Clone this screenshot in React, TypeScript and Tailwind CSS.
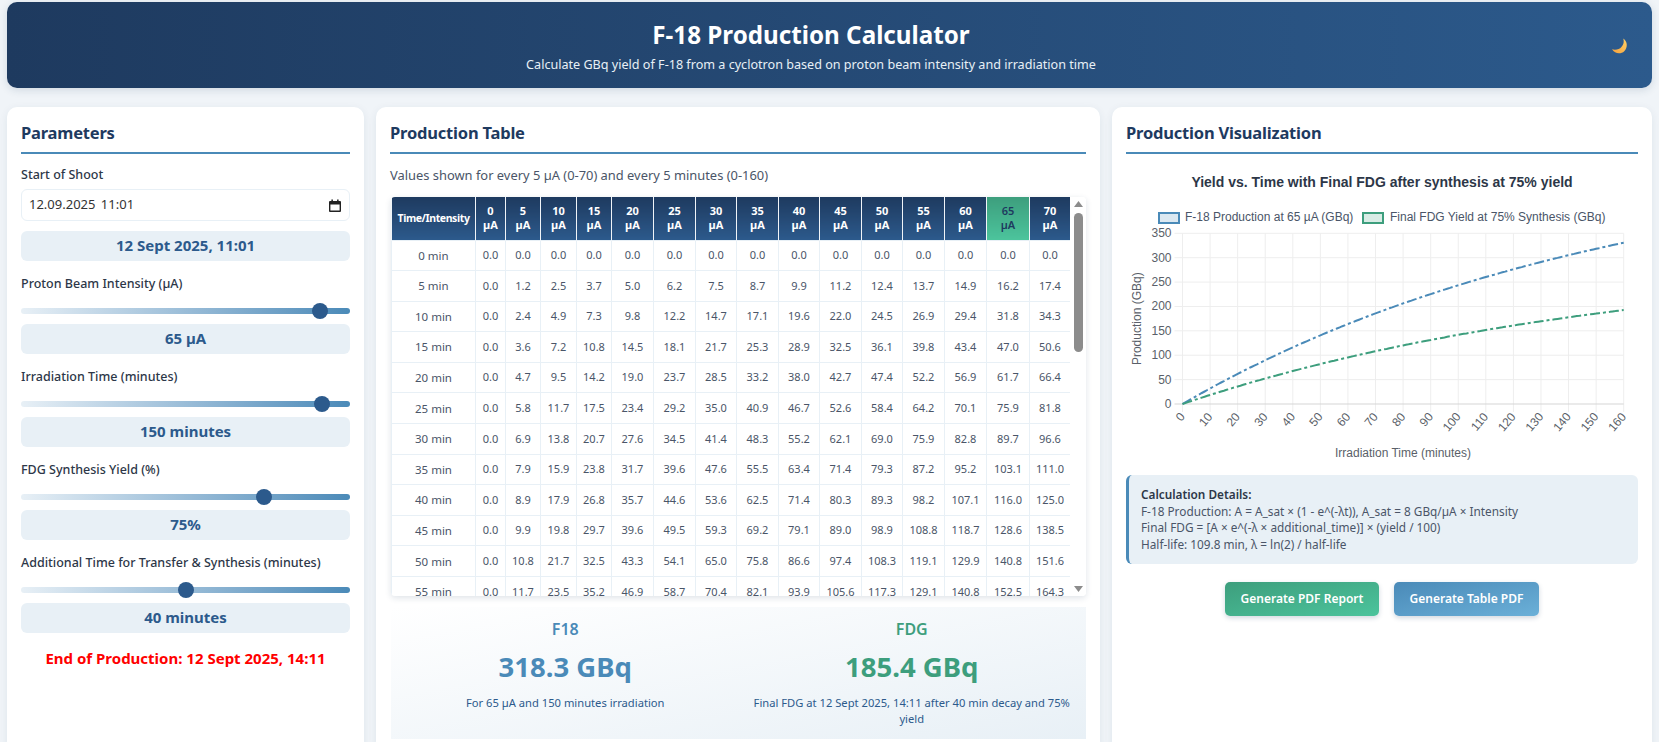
const HALF_LIFE = 109.8;
const LAMBDA = Math.LN2 / HALF_LIFE;
const SAT_PER_UA = 8;

const production = (intensity: number, minutes: number) =>
  SAT_PER_UA * intensity * (1 - Math.exp(-LAMBDA * minutes));

const INTENSITIES = Array.from({ length: 15 }, (_, i) => i * 5);
// only the rows the visible part of the table shows
const TIMES = Array.from({ length: 12 }, (_, i) => i * 5);

const COL_WIDTHS = [
  'w-[84px]', 'w-[30px]', 'w-[35px]', 'w-[36px]', 'w-[35px]', 'w-[42px]', 'w-[42px]', 'w-[41px]',
  'w-[42px]', 'w-[41px]', 'w-[42px]', 'w-[41px]', 'w-[42px]', 'w-[42px]', 'w-[43px]', 'w-[41px]',
];

function CardTitle({ children }: { children: string }) {
  return (
    <h2 className="h-[33px] border-b-2 border-[#4a8ab8] text-[16.5px] leading-[23px] font-bold tracking-[-0.2px] text-[#1e3a5f]">
      {children}
    </h2>
  );
}

function ValueBadge({ children, className = '' }: { children: string; className?: string }) {
  return (
    <div className={`flex h-[30px] items-center justify-center rounded-md bg-[#e8f0f6] pb-px text-[15px] font-bold text-[#2c5a8c] ${className}`}>
      {children}
    </div>
  );
}

function SliderField({ label, min, max, value, text }: { label: string; min: number; max: number; value: number; text: string }) {
  return (
    <div className="mt-[14px]">
      <label className="block text-[12.5px] leading-[18px] font-medium text-[#2d3748]">{label}</label>
      <input
        type="range"
        min={min}
        max={max}
        defaultValue={value}
        className="mt-[15px] mb-[10px] block h-[6px] w-full cursor-pointer appearance-none rounded-[3px] bg-gradient-to-r from-[#e8f0f6] to-[#4a8ab8] [&::-webkit-slider-thumb]:h-4 [&::-webkit-slider-thumb]:w-4 [&::-webkit-slider-thumb]:appearance-none [&::-webkit-slider-thumb]:rounded-full [&::-webkit-slider-thumb]:bg-[#2c5a8c]"
      />
      <ValueBadge>{text}</ValueBadge>
    </div>
  );
}

function ParametersCard() {
  return (
    <section className="rounded-[10px] bg-white p-[14px] shadow-[0_2px_8px_rgba(30,58,95,0.08)]">
      <CardTitle>Parameters</CardTitle>
      <label className="mt-[12px] block text-[12.5px] leading-[18px] font-medium text-[#2d3748]">Start of Shoot</label>
      <div className="mt-[5px] flex h-8 items-center justify-between rounded-md border border-[#e8f0f6] pr-[8px] pl-[7px] text-[13px] text-[#333]">
        <span className="[word-spacing:2px]">12.09.2025 11:01</span>
        <svg width="12" height="13" viewBox="0 0 12 13">
          <path d="M1 2h10a1 1 0 0 1 1 1v9a1 1 0 0 1-1 1H1a1 1 0 0 1-1-1V3a1 1 0 0 1 1-1zm.4 3.6v6h9.2v-6z" fill="#222" />
          <rect x="2.4" y="0.5" width="1.5" height="2.5" fill="#222" />
          <rect x="8.1" y="0.5" width="1.5" height="2.5" fill="#222" />
        </svg>
      </div>
      <ValueBadge className="mt-[10px]">12 Sept 2025, 11:01</ValueBadge>
      <SliderField label="Proton Beam Intensity (µA)" min={0} max={70} value={65} text="65 µA" />
      <SliderField label="Irradiation Time (minutes)" min={0} max={160} value={150} text="150 minutes" />
      <SliderField label="FDG Synthesis Yield (%)" min={0} max={100} value={75} text="75%" />
      <SliderField label="Additional Time for Transfer & Synthesis (minutes)" min={0} max={80} value={40} text="40 minutes" />
      <p className="mt-[15px] text-center text-[15px] leading-5 font-bold text-[#ff0000]">End of Production: 12 Sept 2025, 14:11</p>
    </section>
  );
}

function ScrollBar() {
  return (
    <div className="flex w-4 flex-col items-center bg-white pt-[4px]">
      <svg width="9" height="6" viewBox="0 0 9 6"><path d="M4.5 0 9 6H0z" fill="#8c8c8c" /></svg>
      <div className="mt-[6px] h-[139px] w-[9px] rounded-full bg-[#8c8c8c]" />
      <svg className="mt-auto mb-[4px]" width="9" height="6" viewBox="0 0 9 6"><path d="M0 0h9L4.500 6z" fill="#8c8c8c" /></svg>
    </div>
  );
}

function ProductionTable() {
  return (
    <div className="mt-[13px] ml-px flex h-[399px] overflow-hidden rounded-[4px] shadow-[0_2px_6px_rgba(30,58,95,0.14)]">
      <div className="w-[679px] overflow-hidden">
        <table className="w-[679px] table-fixed border-collapse text-center text-[11px] text-[#4a5568]">
          <colgroup>
            {COL_WIDTHS.map((w, i) => <col key={i} className={w} />)}
          </colgroup>
          <thead>
            <tr className="h-[43px] text-[11px] leading-[14px] font-bold text-white">
              <th className="border-x border-x-[#f0f4f8] bg-gradient-to-b from-[#1e3a5f] to-[#2c5a8c] text-[10.5px] font-bold tracking-[-0.4px]">Time/Intensity</th>
              {INTENSITIES.map((ua) => (
                <th
                  key={ua}
                  className={
                    ua === 65
                      ? 'border-x border-x-[#f0f4f8] bg-gradient-to-b from-[#3d9e7d] to-[#4cc49c] font-semibold text-[#1e3a5f]'
                      : 'border-x border-x-[#f0f4f8] bg-gradient-to-b from-[#1e3a5f] to-[#2c5a8c]'
                  }
                >
                  <span className="block">{ua}</span>
                  <span className="block">µA</span>
                </th>
              ))}
            </tr>
          </thead>
          <tbody>
            {TIMES.map((t) => (
              <tr key={t} className="h-[30.6px]">
                <td className="border border-[#e8f0f6] text-[11.5px]">{t} min</td>
                {INTENSITIES.map((ua) => (
                  <td key={ua} className="border border-[#e8f0f6]">{production(ua, t).toFixed(1)}</td>
                ))}
              </tr>
            ))}
          </tbody>
        </table>
      </div>
      <ScrollBar />
    </div>
  );
}

function ResultBlock({ title, value, note, color }: { title: string; value: string; note: string; color: string }) {
  return (
    <div className="text-center">
      <h3 className={`text-[16px] leading-[22px] font-semibold ${color}`}>{title}</h3>
      <p className={`mt-[9px] text-[27.5px] leading-[36px] font-bold ${color}`}>{value}</p>
      <p className="mt-[10px] text-[11.2px] leading-4 text-[#2c5a8c]">{note}</p>
    </div>
  );
}

function TableCard() {
  return (
    <section className="rounded-[10px] bg-white p-[14px] shadow-[0_2px_8px_rgba(30,58,95,0.08)]">
      <CardTitle>Production Table</CardTitle>
      <p className="mt-3 text-[12.9px] leading-[18px] text-[#4a5568]">Values shown for every 5 µA (0-70) and every 5 minutes (0-160)</p>
      <ProductionTable />
      <div className="mt-[11px] ml-px grid h-[132px] grid-cols-2 gap-5 bg-gradient-to-br from-white to-[#e8f0f6] px-[11px] pt-[11px]">
        <ResultBlock title="F18" value="318.3 GBq" note="For 65 µA and 150 minutes irradiation" color="text-[#4a8ab8]" />
        <ResultBlock title="FDG" value="185.4 GBq" note="Final FDG at 12 Sept 2025, 14:11 after 40 min decay and 75% yield" color="text-[#3d9e7d]" />
      </div>
    </section>
  );
}

function YieldChart() {
  // plot box in svg coordinates
  const left = 56.5;
  const right = 497.7;
  const top = 69.3;
  const bottom = 240;
  const px = (t: number) => left + (t / 160) * (right - left);
  const py = (v: number) => bottom - (v / 350) * (bottom - top);
  const xTicks = Array.from({ length: 17 }, (_, i) => i * 10);
  const yTicks = Array.from({ length: 8 }, (_, i) => i * 50);
  const samples = Array.from({ length: 161 }, (_, i) => i);
  const f18 = samples.map((t) => `${px(t).toFixed(1)},${py(production(65, t)).toFixed(1)}`).join(' ');
  const fdg = samples
    .map((t) => `${px(t).toFixed(1)},${py(production(65, t) * Math.exp(-LAMBDA * 40) * 0.75).toFixed(1)}`)
    .join(' ');

  return (
    <svg width="512" height="299" className="mt-[10px] block [font-family:'Liberation_Sans',Arial,sans-serif]">
      <text x="256" y="23" textAnchor="middle" fontSize="14" fontWeight="700" fill="#2d3748">
        Yield vs. Time with Final FDG after synthesis at 75% yield
      </text>

      <rect x="33" y="49" width="20" height="10" fill="#4a8ab8" fillOpacity="0.2" stroke="#4a8ab8" strokeWidth="2" />
      <text x="59" y="57" fontSize="12" fill="#4a5568">F-18 Production at 65 µA (GBq)</text>
      <rect x="237" y="49" width="20" height="10" fill="#3d9e7d" fillOpacity="0.2" stroke="#3d9e7d" strokeWidth="2" />
      <text x="264" y="57" fontSize="12" fill="#4a5568">Final FDG Yield at 75% Synthesis (GBq)</text>

      {xTicks.map((t) => (
        <line key={t} x1={px(t)} x2={px(t)} y1={top} y2={bottom + 8} stroke="#eeeeee" />
      ))}
      {yTicks.map((v) => (
        <line key={v} x1={left - 8} x2={right} y1={py(v)} y2={py(v)} stroke={v === 0 ? '#d5d5d5' : '#eeeeee'} />
      ))}

      {yTicks.map((v) => (
        <text key={v} x={left - 11} y={py(v) + 4} textAnchor="end" fontSize="12" fill="#5a5f69">{v}</text>
      ))}
      {xTicks.map((t) => (
        <text
          key={t}
          x={px(t) + 3}
          y={bottom + 13}
          textAnchor="end"
          fontSize="12"
          fill="#5a5f69"
          transform={`rotate(-50 ${px(t) + 3} ${bottom + 13})`}
        >
          {t}
        </text>
      ))}

      <polyline points={f18} fill="none" stroke="#4a8ab8" strokeWidth="2" strokeDasharray="10 3 3 3" />
      <polyline points={fdg} fill="none" stroke="#3d9e7d" strokeWidth="2" strokeDasharray="10 3 3 3" />

      <text x="277" y="293" textAnchor="middle" fontSize="12" fill="#5a5f69">Irradiation Time (minutes)</text>
      <text
        x="15"
        y="154.700"
        textAnchor="middle"
        fontSize="12"
        fill="#5a5f69"
        transform="rotate(-90 15 154.700)"
      >
        Production (GBq)
      </text>
    </svg>
  );
}

function VisualizationCard() {
  return (
    <section className="rounded-[10px] bg-white p-[14px] shadow-[0_2px_8px_rgba(30,58,95,0.08)]">
      <CardTitle>Production Visualization</CardTitle>
      <YieldChart />
      <div className="mt-[12px] h-[89px] rounded-md border-l-[3px] border-[#4a8ab8] bg-[#e8f0f6] pt-[11px] pl-3 text-[11.8px] leading-[16.6px] text-[#4a5568]">
        <strong className="block font-semibold text-[#2d3748]">Calculation Details:</strong>
        F-18 Production: A = A_sat × (1 - e^(-λt)), A_sat = 8 GBq/µA × Intensity
        <br />
        Final FDG = [A × e^(-λ × additional_time)] × (yield / 100)
        <br />
        Half-life: 109.8 min, λ = ln(2) / half-life
      </div>
      <div className="mt-[18px] flex justify-center gap-[15px]">
        <button className="h-[34px] w-[154px] rounded-[5px] bg-gradient-to-br from-[#3d9e7d] to-[#4cc49c] text-[12px] font-semibold text-white shadow-[0_2px_5px_rgba(30,58,95,0.2)]">
          Generate PDF Report
        </button>
        <button className="h-[34px] w-[145px] rounded-[5px] bg-gradient-to-br from-[#4a8ab8] to-[#6bb0d8] text-[12px] font-semibold text-white shadow-[0_2px_5px_rgba(30,58,95,0.2)]">
          Generate Table PDF
        </button>
      </div>
    </section>
  );
}

export default function App() {
  return (
    <div className="h-[742px] overflow-hidden bg-[#f0f4f8] px-[7px] pt-[2px] [font-family:'Noto_Sans',sans-serif]">
      <header className="flex h-[86px] items-center rounded-[10px] bg-gradient-to-r from-[#1e3a5f] to-[#2c5a8c] text-white shadow-[0_2px_8px_rgba(30,58,95,0.15)]">
        <div className="flex-1 pt-[2px] pl-[3px] text-center">
          <h1 className="text-[24.2px] leading-[32px] font-bold">F-18 Production Calculator</h1>
          <p className="mt-[5px] text-[12.6px] leading-[18px] text-[#e8f0f6]">Calculate GBq yield of F-18 from a cyclotron based on proton beam intensity and irradiation time</p>
        </div>
        <div className="mt-[3px] w-10">
          <svg width="16" height="17" viewBox="0 0 17 17">
            <defs>
              <linearGradient id="moon" x1="1" y1="0" x2="0" y2="1">
                <stop offset="0" stopColor="#ffd166" />
                <stop offset="1" stopColor="#f5a03c" />
              </linearGradient>
            </defs>
            <path d="M12 0C16.500 3 17 9.500 13 13.500 9.500 17 3 16.500 0 11.500 4 12.500 8 11.500 10 9 12.500 6.500 13 3 12 0Z" fill="url(#moon)" />
          </svg>
        </div>
      </header>
      <main className="mt-[19px] grid grid-cols-[357px_724px_540px] gap-3">
        <ParametersCard />
        <TableCard />
        <VisualizationCard />
      </main>
    </div>
  );
}
